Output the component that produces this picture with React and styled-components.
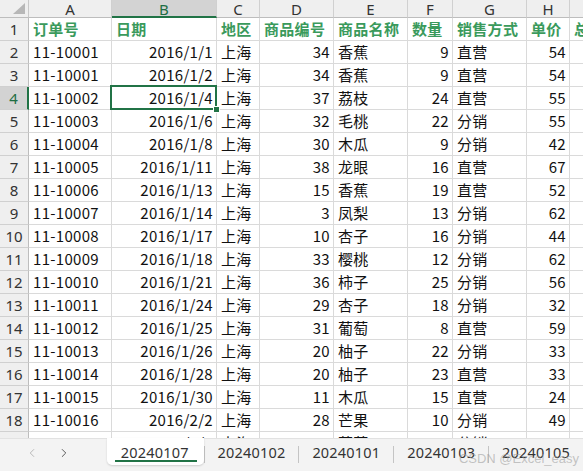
import React from "react";
import styled, { createGlobalStyle } from "styled-components";
import { ChevronLeft, ChevronRight } from "lucide-react";

const GlobalStyle = createGlobalStyle`
  html, body {
    margin: 0;
    padding: 0;
    background: #ffffff;
  }
  body {
    font-family: "Noto Sans CJK SC", "Noto Sans", sans-serif;
    overflow: hidden;
  }
`;

const COLS = ["A", "B", "C", "D", "E", "F", "G", "H", ""];
const WIDTHS = [29, 83, 105, 43, 74, 74, 45, 74, 43, 54];
const HEADERS = ["订单号", "日期", "地区", "商品编号", "商品名称", "数量", "销售方式", "单价", "总"];
const ALIGN = ["left", "right", "left", "right", "left", "right", "left", "right", "right"];

const DATA = [
  ["11-10001", "2016/1/1", "上海", 34, "香蕉", 9, "直营", 54],
  ["11-10001", "2016/1/2", "上海", 34, "香蕉", 9, "直营", 54],
  ["11-10002", "2016/1/4", "上海", 37, "荔枝", 24, "直营", 55],
  ["11-10003", "2016/1/6", "上海", 32, "毛桃", 22, "分销", 55],
  ["11-10004", "2016/1/8", "上海", 30, "木瓜", 9, "分销", 42],
  ["11-10005", "2016/1/11", "上海", 38, "龙眼", 16, "直营", 67],
  ["11-10006", "2016/1/13", "上海", 15, "香蕉", 19, "直营", 52],
  ["11-10007", "2016/1/14", "上海", 3, "凤梨", 13, "分销", 62],
  ["11-10008", "2016/1/17", "上海", 10, "杏子", 16, "分销", 44],
  ["11-10009", "2016/1/18", "上海", 33, "樱桃", 12, "分销", 62],
  ["11-10010", "2016/1/21", "上海", 36, "柿子", 25, "分销", 56],
  ["11-10011", "2016/1/24", "上海", 29, "杏子", 18, "分销", 32],
  ["11-10012", "2016/1/25", "上海", 31, "葡萄", 8, "直营", 59],
  ["11-10013", "2016/1/26", "上海", 20, "柚子", 22, "分销", 33],
  ["11-10014", "2016/1/28", "上海", 20, "柚子", 23, "直营", 33],
  ["11-10015", "2016/1/30", "上海", 11, "木瓜", 15, "直营", 24],
  ["11-10016", "2016/2/2", "上海", 28, "芒果", 10, "分销", 49],
  ["11-10017", "2016/2/4", "上海", 12, "葡萄", 17, "分销", 41],
];

const TABS = ["20240107", "20240102", "20240101", "20240103", "20240105"];

const Page = styled.div`
  width: 583px;
  height: 471px;
  display: flex;
  flex-direction: column;
  overflow: hidden;
  position: relative;
`;

const Sheet = styled.div`
  height: 438px;
  overflow: hidden;
`;

const Grid = styled.div`
  display: grid;
  grid-template-columns: ${WIDTHS.map((w) => `${w}px`).join(" ")};
  grid-template-rows: 18px repeat(19, 23px);
  width: max-content;
`;

const Corner = styled.div`
  background: #efefef;
  border-right: 1px solid #c8c8c8;
  border-bottom: 1px solid #bdbdbd;
  display: flex;
  align-items: flex-end;
  justify-content: flex-end;
  padding: 0 3px 3px 0;
  box-sizing: border-box;
`;

const ColHead = styled.div`
  box-sizing: border-box;
  background: ${(p) => (p.$active ? "#d3d3d3" : "#efefef")};
  color: ${(p) => (p.$active ? "#1f6e43" : "#333")};
  border-right: 1px solid #d0d0d0;
  border-bottom: ${(p) => (p.$active ? "2px solid #217346" : "1px solid #bdbdbd")};
  font-family: "Noto Sans", "Liberation Sans", sans-serif;
  font-size: 15px;
  line-height: 18px;
  text-align: center;
  overflow: hidden;
`;

const RowHead = styled.div`
  box-sizing: border-box;
  background: ${(p) => (p.$active ? "#d3d3d3" : "#efefef")};
  color: ${(p) => (p.$active ? "#1f6e43" : "#333")};
  border-right: ${(p) => (p.$active ? "2px solid #217346" : "1px solid #bdbdbd")};
  border-bottom: 1px solid #d0d0d0;
  font-family: "Noto Sans", "Liberation Sans", sans-serif;
  font-size: 15px;
  display: flex;
  align-items: flex-end;
  justify-content: center;
  padding-bottom: 1px;
`;

const Cell = styled.div`
  box-sizing: border-box;
  position: relative;
  border-right: 1px solid #dadada;
  border-bottom: 1px solid #dadada;
  font-size: 15px;
  line-height: 22px;
  color: ${(p) => (p.$head ? "#3a9a5c" : "#111")};
  font-weight: ${(p) => (p.$head ? 700 : 400)};
  text-align: ${(p) => p.$align};
  padding: 0 3px 0 4px;
  white-space: nowrap;
  overflow: ${(p) => (p.$head || p.$selected ? "visible" : "hidden")};
  letter-spacing: 0.3px;
`;

const Selection = styled.div`
  position: absolute;
  z-index: 2;
  top: -2px;
  left: -2px;
  right: -1px;
  bottom: -1px;
  border: 2px solid #217346;
  pointer-events: none;
`;

const Handle = styled.div`
  position: absolute;
  right: -5px;
  bottom: -5px;
  width: 5px;
  height: 5px;
  background: #217346;
  border: 1px solid #fff;
`;

const TabBar = styled.div`
  flex: 1;
  display: flex;
  align-items: flex-start;
  background: #f3f3f3;
  border-top: 1px solid #e2e2e2;
  font-size: 14.5px;
  color: #333;
`;

const Nav = styled.div`
  width: 117px;
  height: 28px;
  display: flex;
  align-items: center;
  gap: 18px;
  padding-left: 25px;
  box-sizing: border-box;
`;

const Tab = styled.div`
  position: relative;
  height: 27px;
  margin-top: -1px;
  display: flex;
  align-items: center;
  padding: 0 ${(p) => (p.$active ? "15px 0 14px" : "13px")};
  background: ${(p) => (p.$active ? "#ffffff" : "transparent")};
  border-radius: 0 0 5px 5px;
  box-shadow: ${(p) => (p.$active ? "0 1px 2px rgba(0,0,0,0.15)" : "none")};
  font-family: "Noto Sans", "Liberation Sans", sans-serif;
  letter-spacing: 0.2px;
  &::after {
    content: "";
    position: absolute;
    left: 8px;
    right: 7px;
    bottom: 3px;
    height: 2px;
    background: ${(p) => (p.$active ? "#217346" : "transparent")};
  }
`;

const Sep = styled.div`
  width: 1px;
  height: 17px;
  margin-top: 7px;
  background: #c4c4c4;
`;

const Watermark = styled.div`
  position: absolute;
  right: 4px;
  bottom: 5px;
  font-family: "Liberation Sans", sans-serif;
  font-size: 13px;
  color: rgba(160, 160, 160, 0.6);
`;

const CornerMark = () => (
  <svg width="12" height="11" viewBox="0 0 12 11">
    <polygon points="12,0 12,11 0,11" fill="#b7b7b7" />
  </svg>
);

const totals = DATA.map((r) => r[5] * r[7]);

export default function App() {
  return (
    <Page>
      <GlobalStyle />
      <Sheet>
        <Grid>
          <Corner>
            <CornerMark />
          </Corner>
          {COLS.map((c, i) => (
            <ColHead key={"h" + i} $active={c === "B"}>
              {c}
            </ColHead>
          ))}

          <RowHead>1</RowHead>
          {HEADERS.map((h, i) => (
            <Cell key={"t" + i} $head $align="left">
              {h}
            </Cell>
          ))}

          {DATA.map((row, r) => (
            <React.Fragment key={r}>
              <RowHead $active={r === 2}>{r + 2}</RowHead>
              {[...row, totals[r]].map((v, c) => {
                const selected = r === 2 && c === 1;
                return (
                  <Cell key={c} $align={ALIGN[c]} $selected={selected}>
                    {v}
                    {selected && (
                      <Selection>
                        <Handle />
                      </Selection>
                    )}
                  </Cell>
                );
              })}
            </React.Fragment>
          ))}
        </Grid>
      </Sheet>
      <TabBar>
        <Nav>
          <ChevronLeft size={14} color="#b0b0b0" strokeWidth={1.5} />
          <ChevronRight size={14} color="#444" strokeWidth={1.5} />
        </Nav>
        {TABS.map((t, i) => (
          <React.Fragment key={t}>
            {i > 0 && <Sep />}
            <Tab $active={i === 0}>{t}</Tab>
          </React.Fragment>
        ))}
      </TabBar>
      <Watermark>CSDN @Excel_easy</Watermark>
    </Page>
  );
}
